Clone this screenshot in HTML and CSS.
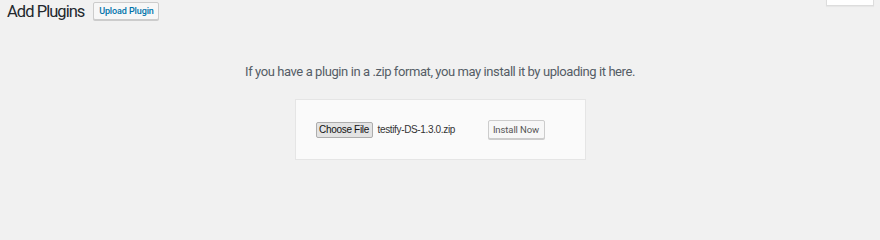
FILE: index.html
```html
<!DOCTYPE html>
<html lang="en">
<head>
<meta charset="utf-8">
<title>Add Plugins</title>
<link rel="stylesheet" href="styles.css">
</head>
<body>
<div class="screen-meta">
  <span class="help-tab">Help</span>
</div>
<div class="wrap">
  <div class="page-header">
    <h1 class="page-title">Add Plugins</h1>
    <button class="upload-btn" type="button">Upload Plugin</button>
  </div>
  <div class="upload-section">
    <p class="install-help">If you have a plugin in a .zip format, you may install it by uploading it here.</p>
    <form class="upload-form">
      <span class="file-field">
        <button class="choose-btn" type="button">Choose File</button>
        <span class="file-name">testify-DS-1.3.0.zip</span>
      </span>
      <button class="install-btn" type="button">Install Now</button>
    </form>
  </div>
</div>
</body>
</html>
```

FILE: styles.css
```css
html, body {
  margin: 0;
  padding: 0;
  background: #f1f1f1;
  height: 100%;
}
body {
  position: relative;
  font-family: Roboto, "Noto Sans", sans-serif;
  color: #444;
  overflow: hidden;
}
.screen-meta {
  position: absolute;
  top: 0;
  right: 6px;
}
.help-tab {
  display: block;
  width: 48px;
  height: 20px;
  margin-top: -14px;
  box-sizing: border-box;
  background: #fff;
  border: 1px solid #ddd;
  border-top: none;
  box-shadow: 0 1px 1px rgba(0,0,0,0.04);
  font-size: 10px;
  line-height: 12px;
  color: #72777c;
  text-align: center;
}
.wrap {
  padding: 0 0 0 7px;
}
.page-header {
  display: flex;
  align-items: center;
  gap: 9px;
  height: 23px;
}
.page-title {
  margin: 0;
  font-family: Roboto, "Noto Sans", sans-serif;
  font-weight: 400;
  font-size: 16.5px;
  letter-spacing: -0.95px;
  line-height: 23px;
  color: #23282d;
}
.upload-btn {
  margin-top: -2px;
  height: 18px;
  width: 66px;
  padding: 0;
  background: #f7f7f7;
  border: 1px solid #ccc;
  border-radius: 2px;
  box-shadow: 0 1px 0 #ccc;
  font-family: Roboto, "Noto Sans", sans-serif;
  font-weight: 500;
  font-size: 9px;
  letter-spacing: -0.1px;
  color: #0073aa;
  line-height: 16px;
  white-space: nowrap;
}
.upload-section {
  display: flex;
  flex-direction: column;
  align-items: center;
  margin-left: -7px;
}
.install-help {
  margin: 40px 0 0;
  font-size: 13px;
  letter-spacing: -0.42px;
  line-height: 18px;
  color: #555d66;
}
.upload-form {
  margin-top: 18px;
  width: 291px;
  height: 61px;
  box-sizing: border-box;
  background: #fafafa;
  border: 1px solid #e5e5e5;
  display: flex;
  align-items: center;
  padding: 0 0 0 20px;
}
.file-field {
  display: flex;
  align-items: center;
  width: 172px;
}
.choose-btn {
  height: 16px;
  width: 57px;
  padding: 0;
  background: #e3e3e3;
  border: 1px solid #adadad;
  border-radius: 2px;
  font-family: "Liberation Sans", Arial, sans-serif;
  font-size: 10px;
  letter-spacing: -0.3px;
  line-height: 14px;
  color: #111;
  white-space: nowrap;
}
.file-name {
  margin-left: 5px;
  font-family: "Liberation Sans", Arial, sans-serif;
  font-size: 10px;
  letter-spacing: -0.35px;
  color: #333;
  white-space: nowrap;
}
.install-btn {
  height: 19px;
  width: 57px;
  padding: 0;
  background: #f7f7f7;
  border: 1px solid #ccc;
  border-radius: 2px;
  box-shadow: 0 1px 0 #ccc;
  font-family: Roboto, "Noto Sans", sans-serif;
  font-size: 9.5px;
  letter-spacing: -0.1px;
  color: #555;
  line-height: 17px;
  white-space: nowrap;
}
```
